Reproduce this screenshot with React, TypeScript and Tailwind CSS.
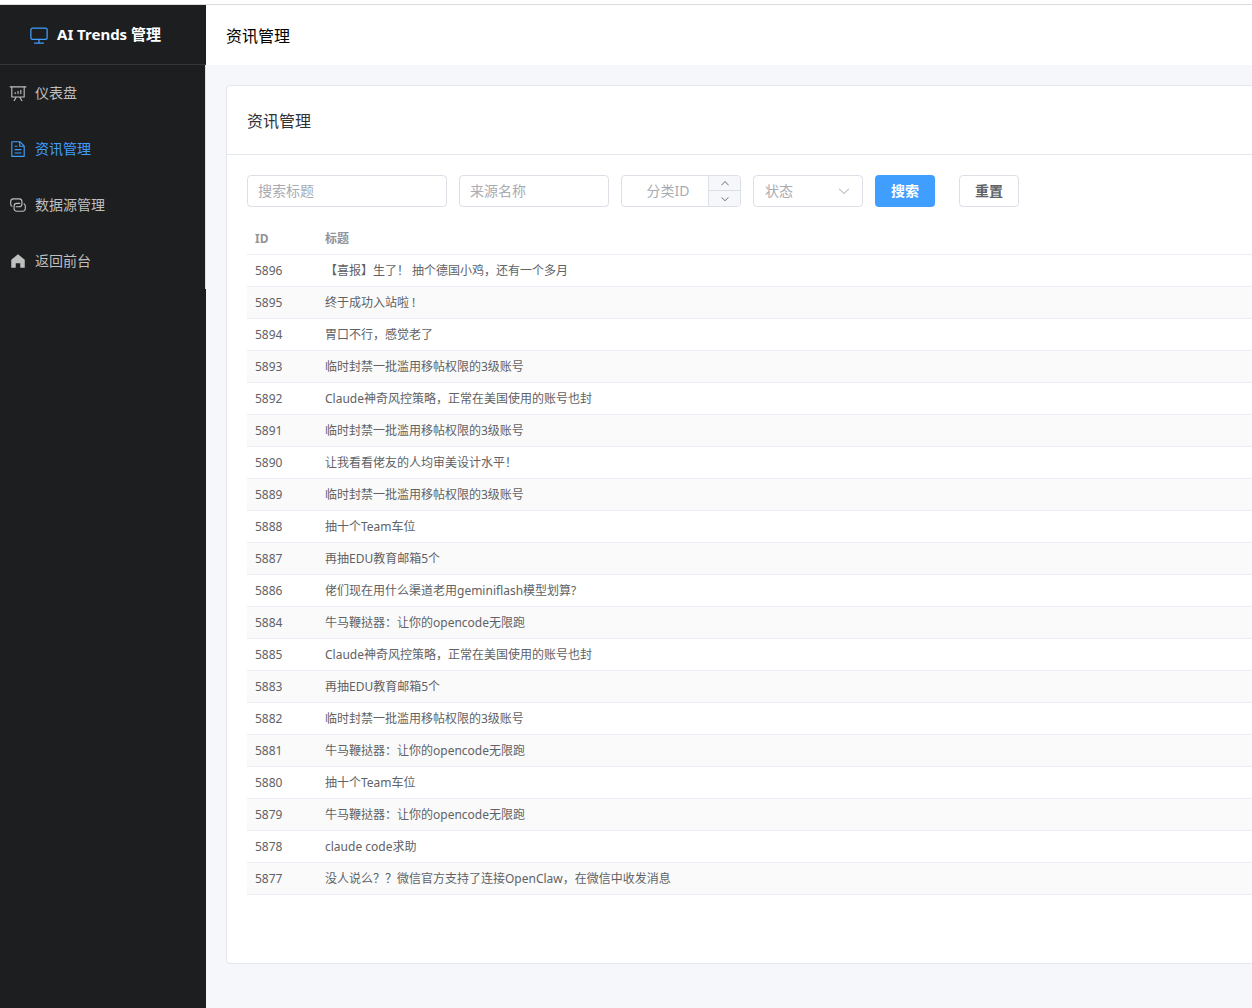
import React from "react";

type IconProps = { paths: string[]; className?: string };

function Icon({ paths, className }: IconProps) {
  return (
    <svg viewBox="0 0 1024 1024" fill="currentColor" aria-hidden="true" className={className}>
      {paths.map((d) => (
        <path key={d} d={d} />
      ))}
    </svg>
  );
}

const MONITOR = [
  "M544 768v128h192a32 32 0 1 1 0 64H288a32 32 0 1 1 0-64h192V768H192A128 128 0 0 1 64 640V256a128 128 0 0 1 128-128h640a128 128 0 0 1 128 128v384a128 128 0 0 1-128 128H544zM192 192a64 64 0 0 0-64 64v384a64 64 0 0 0 64 64h640a64 64 0 0 0 64-64V256a64 64 0 0 0-64-64H192z",
];
const ANALYSIS = [
  "m665.216 768 110.848 192h-73.856L591.36 768H433.024L322.176 960H248.32l110.848-192H160a32 32 0 0 1-32-32V192H64a32 32 0 0 1 0-64h896a32 32 0 1 1 0 64h-64v544a32 32 0 0 1-32 32H665.216zM832 192H192v512h640V192zM352 448a32 32 0 0 1 32 32v64a32 32 0 0 1-64 0v-64a32 32 0 0 1 32-32zm160-64a32 32 0 0 1 32 32v128a32 32 0 0 1-64 0V416a32 32 0 0 1 32-32zm160-64a32 32 0 0 1 32 32v192a32 32 0 1 1-64 0V352a32 32 0 0 1 32-32z",
];
const DOCUMENT = [
  "M832 384H576V128H192v768h640V384zm-26.496-64L640 154.496V320h165.504zM160 64h480l256 256v608a32 32 0 0 1-32 32H160a32 32 0 0 1-32-32V96a32 32 0 0 1 32-32zm160 448h384v64H320v-64zm0-192h160v64H320v-64zm0 384h384v64H320v-64z",
];
const CONNECTION = [
  "M640 384v64H448a128 128 0 0 0-128 128v128a128 128 0 0 0 128 128h320a128 128 0 0 0 128-128V576a128 128 0 0 0-64-110.848V394.88c74.56 26.368 128 97.472 128 181.056v128a192 192 0 0 1-192 192H448a192 192 0 0 1-192-192V576a192 192 0 0 1 192-192h192z",
  "M384 640v-64h192a128 128 0 0 0 128-128V320a128 128 0 0 0-128-128H256a128 128 0 0 0-128 128v128a128 128 0 0 0 64 110.848v70.272A192.064 192.064 0 0 1 64 448V320a192 192 0 0 1 192-192h320a192 192 0 0 1 192 192v128a192 192 0 0 1-192 192H384z",
];
const HOME = ["M512 128 128 447.936V896h255.936V640H640v256h255.936V447.936z"];
const ARROW_DOWN = [
  "M831.872 340.864 512 652.672 192.128 340.864a30.592 30.592 0 0 0-42.752 0 29.12 29.12 0 0 0 0 41.6L489.664 714.24a32 32 0 0 0 44.672 0l340.288-331.712a29.12 29.12 0 0 0 0-41.728 30.592 30.592 0 0 0-42.752 0z",
];
const ARROW_UP = [
  "m488.832 344.32-339.84 356.672a32 32 0 0 0 0 44.16l.384.384a29.44 29.44 0 0 0 42.688 0l320-335.872 319.872 335.872a29.44 29.44 0 0 0 42.688 0l.384-.384a32 32 0 0 0 0-44.16L535.168 344.32a32 32 0 0 0-46.336 0z",
];

const menu = [
  { label: "仪表盘", icon: ANALYSIS, active: false },
  { label: "资讯管理", icon: DOCUMENT, active: true },
  { label: "数据源管理", icon: CONNECTION, active: false },
  { label: "返回前台", icon: HOME, active: false },
];

const rows: [number, string][] = [
  [5896, "【喜报】生了！ 抽个德国小鸡，还有一个多月"],
  [5895, "终于成功入站啦 !"],
  [5894, "胃口不行，感觉老了"],
  [5893, "临时封禁一批滥用移帖权限的3级账号"],
  [5892, "Claude神奇风控策略，正常在美国使用的账号也封"],
  [5891, "临时封禁一批滥用移帖权限的3级账号"],
  [5890, "让我看看佬友的人均审美设计水平！"],
  [5889, "临时封禁一批滥用移帖权限的3级账号"],
  [5888, "抽十个Team车位"],
  [5887, "再抽EDU教育邮箱5个"],
  [5886, "佬们现在用什么渠道老用geminiflash模型划算?"],
  [5884, "牛马鞭挞器：让你的opencode无限跑"],
  [5885, "Claude神奇风控策略，正常在美国使用的账号也封"],
  [5883, "再抽EDU教育邮箱5个"],
  [5882, "临时封禁一批滥用移帖权限的3级账号"],
  [5881, "牛马鞭挞器：让你的opencode无限跑"],
  [5880, "抽十个Team车位"],
  [5879, "牛马鞭挞器：让你的opencode无限跑"],
  [5878, "claude code求助"],
  [5877, "没人说么？？微信官方支持了连接OpenClaw，在微信中收发消息"],
];

function Sidebar() {
  return (
    <aside className="w-[206px] shrink-0 bg-[#1d1e1f]">
      <div className="flex h-15 items-center gap-2 border-b border-[#363637] pl-[29px]">
        <Icon paths={MONITOR} className="size-5 text-[#409eff]" />
        <span className="text-[15px] font-bold text-white">AI Trends 管理</span>
      </div>
      <nav className="border-r border-[#dcdfe6]">
        {menu.map((item) => (
          <a
            key={item.label}
            href="#"
            aria-current={item.active ? "page" : undefined}
            className={
              item.active
                ? "flex h-14 items-center gap-2 pl-[9px] text-sm text-[#409eff]"
                : "flex h-14 items-center gap-2 pl-[9px] text-sm text-[#bfbfbf]"
            }
          >
            <Icon paths={item.icon} className="size-[18px]" />
            {item.label}
          </a>
        ))}
      </nav>
    </aside>
  );
}

function Filters() {
  const field =
    "h-8 rounded border border-[#dcdfe6] bg-white px-2.5 pb-0.5 text-sm text-[#606266] outline-none placeholder:text-[#a8abb2]";
  return (
    <form className="flex gap-3" onSubmit={(e) => e.preventDefault()}>
      <input aria-label="搜索标题" placeholder="搜索标题" className={`w-[200px] ${field}`} />
      <input aria-label="来源名称" placeholder="来源名称" className={`w-[150px] ${field}`} />
      <div className="flex h-8 w-[120px] overflow-hidden rounded border border-[#dcdfe6] bg-white">
        <input
          aria-label="分类ID"
          placeholder="分类ID"
          inputMode="numeric"
          className="min-w-0 flex-1 pl-1.5 text-center text-sm text-[#606266] outline-none placeholder:text-[#a8abb2]"
        />
        <div className="grid w-8 grid-rows-2 border-l border-[#dcdfe6] bg-[#f5f7fa] text-[#606266]">
          <button type="button" aria-label="增加" className="flex items-center justify-center border-b border-[#dcdfe6]">
            <Icon paths={ARROW_UP} className="size-2.5" />
          </button>
          <button type="button" aria-label="减少" className="flex items-center justify-center">
            <Icon paths={ARROW_DOWN} className="size-2.5" />
          </button>
        </div>
      </div>
      <div className="grid w-[110px] items-center">
        <select
          aria-label="状态"
          defaultValue=""
          className="col-start-1 row-start-1 h-8 w-full appearance-none rounded border border-[#dcdfe6] bg-white pl-[11px] text-sm text-[#a8abb2] outline-none"
        >
          <option value="">状态</option>
        </select>
        <Icon
          paths={ARROW_DOWN}
          className="pointer-events-none col-start-1 row-start-1 mr-3 size-3.5 justify-self-end text-[#a8abb2]"
        />
      </div>
      <button type="submit" className="h-8 w-15 rounded bg-[#409eff] text-sm font-semibold text-white">
        搜索
      </button>
      <button
        type="reset"
        className="ml-3 h-8 w-15 rounded border border-[#dcdfe6] bg-white text-sm font-semibold text-[#606266]"
      >
        重置
      </button>
    </form>
  );
}

export default function App() {
  return (
    <div className="flex min-h-screen flex-col bg-white font-['Noto_Sans','Noto_Sans_CJK_SC',sans-serif]">
      <div className="h-[5px] border-b border-[#dcdcdc]" />
      <div className="flex flex-1">
        <Sidebar />
        <div className="flex min-w-0 flex-1 flex-col bg-[#f5f7fa]">
          <header className="flex h-15 items-center bg-white pt-0.5 pl-5">
            <h1 className="text-base text-black">资讯管理</h1>
          </header>
          <main className="py-5 pl-5">
            <section className="rounded-l border border-r-0 border-[#e4e7ed] bg-white">
              <div className="border-b border-[#e4e7ed] px-5 pt-[23px] pb-[21px]">
                <h2 className="text-base text-[#303133]">资讯管理</h2>
              </div>
              <div className="pt-5 pb-17 pl-5">
                <Filters />
                <table className="mt-4 w-full table-fixed border-separate border-spacing-0 text-left text-xs">
                  <thead>
                    <tr className="h-8 text-[#909399]">
                      <th className="w-[70px] border-b border-[#ebeef5] px-2 font-bold">ID</th>
                      <th className="border-b border-[#ebeef5] px-2 font-bold">标题</th>
                    </tr>
                  </thead>
                  <tbody className="text-[#606266]">
                    {rows.map(([id, title]) => (
                      <tr key={id} className="h-8 even:bg-[#fafafa]">
                        <td className="border-b border-[#ebeef5] px-2">{id}</td>
                        <td className="truncate border-b border-[#ebeef5] px-2">{title}</td>
                      </tr>
                    ))}
                  </tbody>
                </table>
              </div>
            </section>
          </main>
        </div>
      </div>
    </div>
  );
}
